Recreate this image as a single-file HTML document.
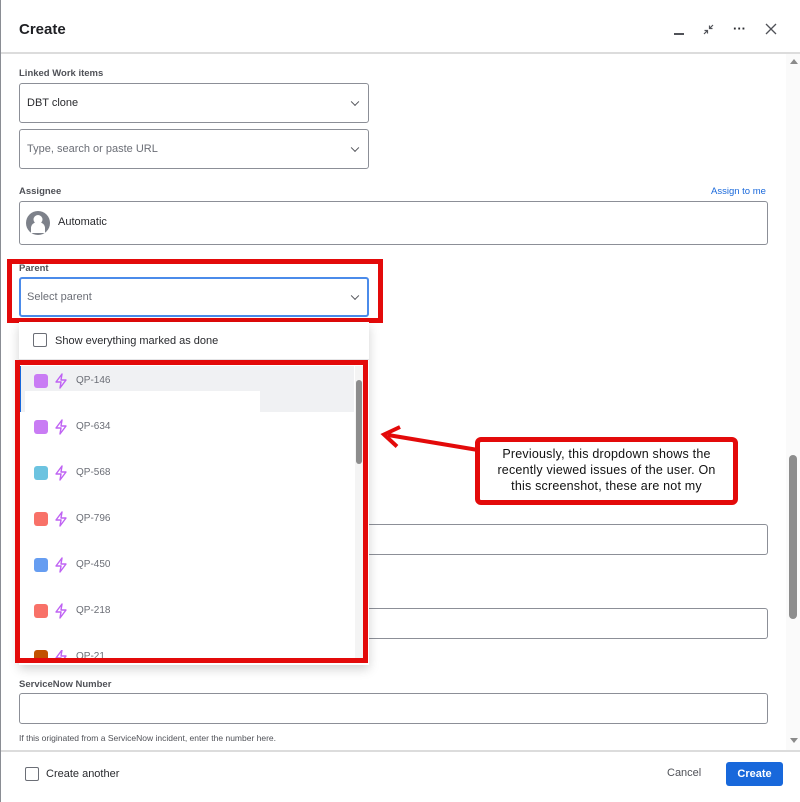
<!DOCTYPE html>
<html><head><meta charset="utf-8"><style>
*{box-sizing:border-box;margin:0;padding:0}
body{width:800px;height:802px;background:#fff;font-family:"Liberation Sans",sans-serif;position:relative;overflow:hidden;color:#292a2e}
.a{position:absolute}
.lbl{font-size:9.5px;font-weight:bold;color:#505258}
.inp{border:1px solid #8c8f97;border-radius:3px;background:#fff}
.chev{position:absolute;right:10px;top:50%;width:6px;height:6px;border-right:1.2px solid #505258;border-bottom:1.2px solid #505258;transform:translateY(-70%) rotate(45deg)}
.item{position:absolute;left:34px;width:200px;height:16px;font-size:10px;color:#6b6e76;white-space:nowrap}
.sq{position:absolute;left:0;top:0;width:14px;height:14px;border-radius:3px}
.bolt{position:absolute;left:20px;top:-1px}
.it{position:absolute;left:42px;top:1px}
</style></head><body>
<div class="a" style="left:0;top:0;width:1px;height:802px;background:#8a8d94"></div>
<div class="a" style="left:19px;top:21px;font-size:15px;font-weight:bold;color:#1f2024">Create</div>
<div class="a" style="left:674px;top:33px;width:10px;height:1.5px;background:#505258"></div>
<svg class="a" style="left:702px;top:23px" width="13" height="13" viewBox="0 0 13 13" fill="none" stroke="#505258" stroke-width="1.2"><path d="M11 2L7.5 5.5M7.5 2.5v3h3M2 11l3.5-3.5M2.5 7.5h3v3"/></svg>
<div class="a" style="left:733px;top:21px;font-size:13px;font-weight:bold;color:#292a2e;letter-spacing:0px">···</div>
<svg class="a" style="left:765px;top:23px" width="12" height="12" viewBox="0 0 12 12" stroke="#505258" stroke-width="1.3"><path d="M1 1L11 11M11 1L1 11"/></svg>
<div class="a" style="left:1px;top:52px;width:799px;height:2px;background:#dcdcdc"></div>
<div class="a" style="left:786px;top:54px;width:14px;height:697px;background:#fafafa"></div>
<div class="a" style="left:790px;top:59px;border:4px solid transparent;border-bottom:5px solid #8a8a8a;border-top:0"></div>
<div class="a" style="left:790px;top:738px;border:4px solid transparent;border-top:5px solid #8a8a8a;border-bottom:0"></div>
<div class="a" style="left:789px;top:455px;width:8px;height:164px;background:#8d8d8d;border-radius:4px"></div>

<div class="a lbl" style="left:19px;top:68px">Linked Work items</div>
<div class="a inp" style="left:19px;top:83px;width:350px;height:40px"><span class="a" style="left:7px;top:13px;font-size:11px">DBT clone</span><i class="chev"></i></div>
<div class="a inp" style="left:19px;top:129px;width:350px;height:40px"><span class="a" style="left:7px;top:13px;font-size:11px;color:#6b6e76">Type, search or paste URL</span><i class="chev"></i></div>

<div class="a lbl" style="left:19px;top:186px">Assignee</div>
<div class="a" style="left:711px;top:186px;font-size:9.5px;color:#1868db">Assign to me</div>
<div class="a inp" style="left:19px;top:201px;width:749px;height:44px">
<svg class="a" style="left:6px;top:9px" width="24" height="24" viewBox="0 0 24 24"><circle cx="12" cy="12" r="12" fill="#7d818a"/><circle cx="12" cy="8.5" r="4.5" fill="#fff"/><path d="M5 22v-5a7 6 0 0 1 14 0v5z" fill="#fff"/></svg>
<span class="a" style="left:38px;top:14px;font-size:11px">Automatic</span></div>

<div class="a" style="left:7px;top:259px;width:376px;height:64px;border:5px solid #e30a0a"></div>
<div class="a lbl" style="left:19px;top:263px">Parent</div>
<div class="a" style="left:19px;top:277px;width:350px;height:40px;border:2px solid #4b8bea;border-radius:3px"><span class="a" style="left:6px;top:12px;font-size:11px;color:#6b6e76">Select parent</span><i class="chev" style="right:9px"></i></div>

<div class="a inp" style="left:360px;top:524px;width:408px;height:31px"></div>
<div class="a inp" style="left:360px;top:608px;width:408px;height:31px"></div>
<div class="a lbl" style="left:19px;top:679px">ServiceNow Number</div>
<div class="a inp" style="left:19px;top:693px;width:749px;height:31px"></div>
<div class="a" style="left:19px;top:733px;font-size:8.5px;color:#505258">If this originated from a ServiceNow incident, enter the number here.</div>

<div class="a" style="left:19px;top:322px;width:350px;height:343px;background:#fff;box-shadow:0 4px 10px rgba(0,0,0,.18)"></div>
<div class="a" style="left:33px;top:333px;width:14px;height:14px;border:1.5px solid #6b6e76;border-radius:2px"></div>
<div class="a" style="left:55px;top:335px;font-size:11px;color:#292a2e">Show everything marked as done</div>
<div class="a" style="left:19px;top:359px;width:350px;height:1px;background:#e4e4e6"></div>
<div class="a" style="left:20px;top:366px;width:334px;height:46px;background:#f0f1f3;border-left:1px solid #1868db"></div>
<div class="a" style="left:25px;top:391px;width:235px;height:21px;background:#fff"></div>
<div class="a" style="left:355px;top:366px;width:8px;height:292px;background:#f4f4f4"></div>
<div class="a" style="left:356px;top:380px;width:6px;height:84px;background:#8d8d8d;border-radius:3px"></div>

<div class="item" style="top:374px"><i class="sq" style="background:#c97cf4"></i><svg class="bolt" width="14" height="16" viewBox="0 0 14 16" fill="none" stroke="#bf63f3" stroke-width="1.4" stroke-linejoin="round"><path d="M8 1L2 9h5l-1 6 6-8H7z"/></svg><span class="it">QP-146</span></div>
<div class="item" style="top:420px"><i class="sq" style="background:#c97cf4"></i><svg class="bolt" width="14" height="16" viewBox="0 0 14 16" fill="none" stroke="#bf63f3" stroke-width="1.4" stroke-linejoin="round"><path d="M8 1L2 9h5l-1 6 6-8H7z"/></svg><span class="it">QP-634</span></div>
<div class="item" style="top:466px"><i class="sq" style="background:#6cc3e0"></i><svg class="bolt" width="14" height="16" viewBox="0 0 14 16" fill="none" stroke="#bf63f3" stroke-width="1.4" stroke-linejoin="round"><path d="M8 1L2 9h5l-1 6 6-8H7z"/></svg><span class="it">QP-568</span></div>
<div class="item" style="top:512px"><i class="sq" style="background:#f87168"></i><svg class="bolt" width="14" height="16" viewBox="0 0 14 16" fill="none" stroke="#bf63f3" stroke-width="1.4" stroke-linejoin="round"><path d="M8 1L2 9h5l-1 6 6-8H7z"/></svg><span class="it">QP-796</span></div>
<div class="item" style="top:558px"><i class="sq" style="background:#669df1"></i><svg class="bolt" width="14" height="16" viewBox="0 0 14 16" fill="none" stroke="#bf63f3" stroke-width="1.4" stroke-linejoin="round"><path d="M8 1L2 9h5l-1 6 6-8H7z"/></svg><span class="it">QP-450</span></div>
<div class="item" style="top:604px"><i class="sq" style="background:#f87168"></i><svg class="bolt" width="14" height="16" viewBox="0 0 14 16" fill="none" stroke="#bf63f3" stroke-width="1.4" stroke-linejoin="round"><path d="M8 1L2 9h5l-1 6 6-8H7z"/></svg><span class="it">QP-218</span></div>
<div class="item" style="top:650px;height:8px;overflow:hidden"><i class="sq" style="background:#c25100"></i><svg class="bolt" width="14" height="16" viewBox="0 0 14 16" fill="none" stroke="#bf63f3" stroke-width="1.4" stroke-linejoin="round"><path d="M8 1L2 9h5l-1 6 6-8H7z"/></svg><span class="it">QP-21</span></div>

<div class="a" style="left:15px;top:360px;width:353px;height:303px;border:5px solid #e30a0a"></div>

<svg class="a" style="left:378px;top:425px" width="110" height="35"><path d="M100 25L10 10" stroke="#e30a0a" stroke-width="4"/><path d="M22 2L6 9.5l13 12" fill="none" stroke="#e30a0a" stroke-width="4"/></svg>
<div class="a" style="left:475px;top:437px;width:263px;height:68px;border:5px solid #e30a0a;border-radius:6px;background:#fff;font-size:12.5px;line-height:16px;text-align:center;padding:4px 10px 0;color:#111;letter-spacing:0.2px">Previously, this dropdown shows the recently viewed issues of the user. On this screenshot, these are not my</div>

<div class="a" style="left:1px;top:750px;width:799px;height:2px;background:#dcdcdc"></div>
<div class="a" style="left:25px;top:767px;width:14px;height:14px;border:1.5px solid #6b6e76;border-radius:2px"></div>
<div class="a" style="left:46px;top:768px;font-size:11px">Create another</div>
<div class="a" style="left:667px;top:767px;font-size:11px;color:#505258">Cancel</div>
<div class="a" style="left:726px;top:762px;width:57px;height:24px;background:#1868db;border-radius:3px;color:#fff;font-size:11px;font-weight:bold;text-align:center;line-height:24px">Create</div>
</body></html>
